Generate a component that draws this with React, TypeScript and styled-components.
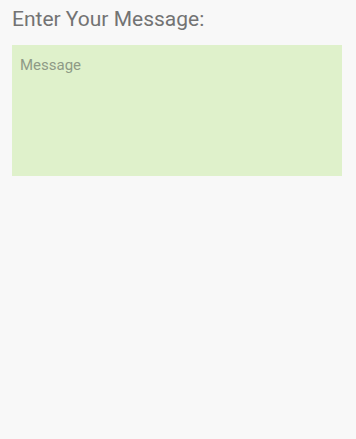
import React from "react";
import styled, { createGlobalStyle } from "styled-components";

const GlobalStyle = createGlobalStyle`
  html, body {
    margin: 0;
    padding: 0;
    background: #f8f8f8;
    font-family: Roboto, "Noto Sans", sans-serif;
  }
`;

const Screen = styled.div`
  display: flex;
  flex-direction: column;
  gap: 12px;
  padding: 5px 14px 0 12px;
  min-height: 439px;
  box-sizing: border-box;
`;

const Title = styled.label`
  font-size: 21px;
  line-height: 28px;
  color: #737373;
`;

const MessageBox = styled.textarea`
  box-sizing: border-box;
  width: 330px;
  height: 131px;
  margin: 0;
  padding: 10px 8px;
  border: none;
  outline: none;
  resize: none;
  background: #dff1cb;
  font-family: Roboto, "Noto Sans", sans-serif;
  font-size: 15px;
  line-height: 20px;
  color: #5a5a5a;

  &::placeholder {
    color: #8e9a86;
  }
`;

function App() {
  return (
    <>
      <GlobalStyle />
      <Screen>
        <Title htmlFor="message">Enter Your Message:</Title>
        <MessageBox id="message" placeholder="Message" />
      </Screen>
    </>
  );
}

export default App;
